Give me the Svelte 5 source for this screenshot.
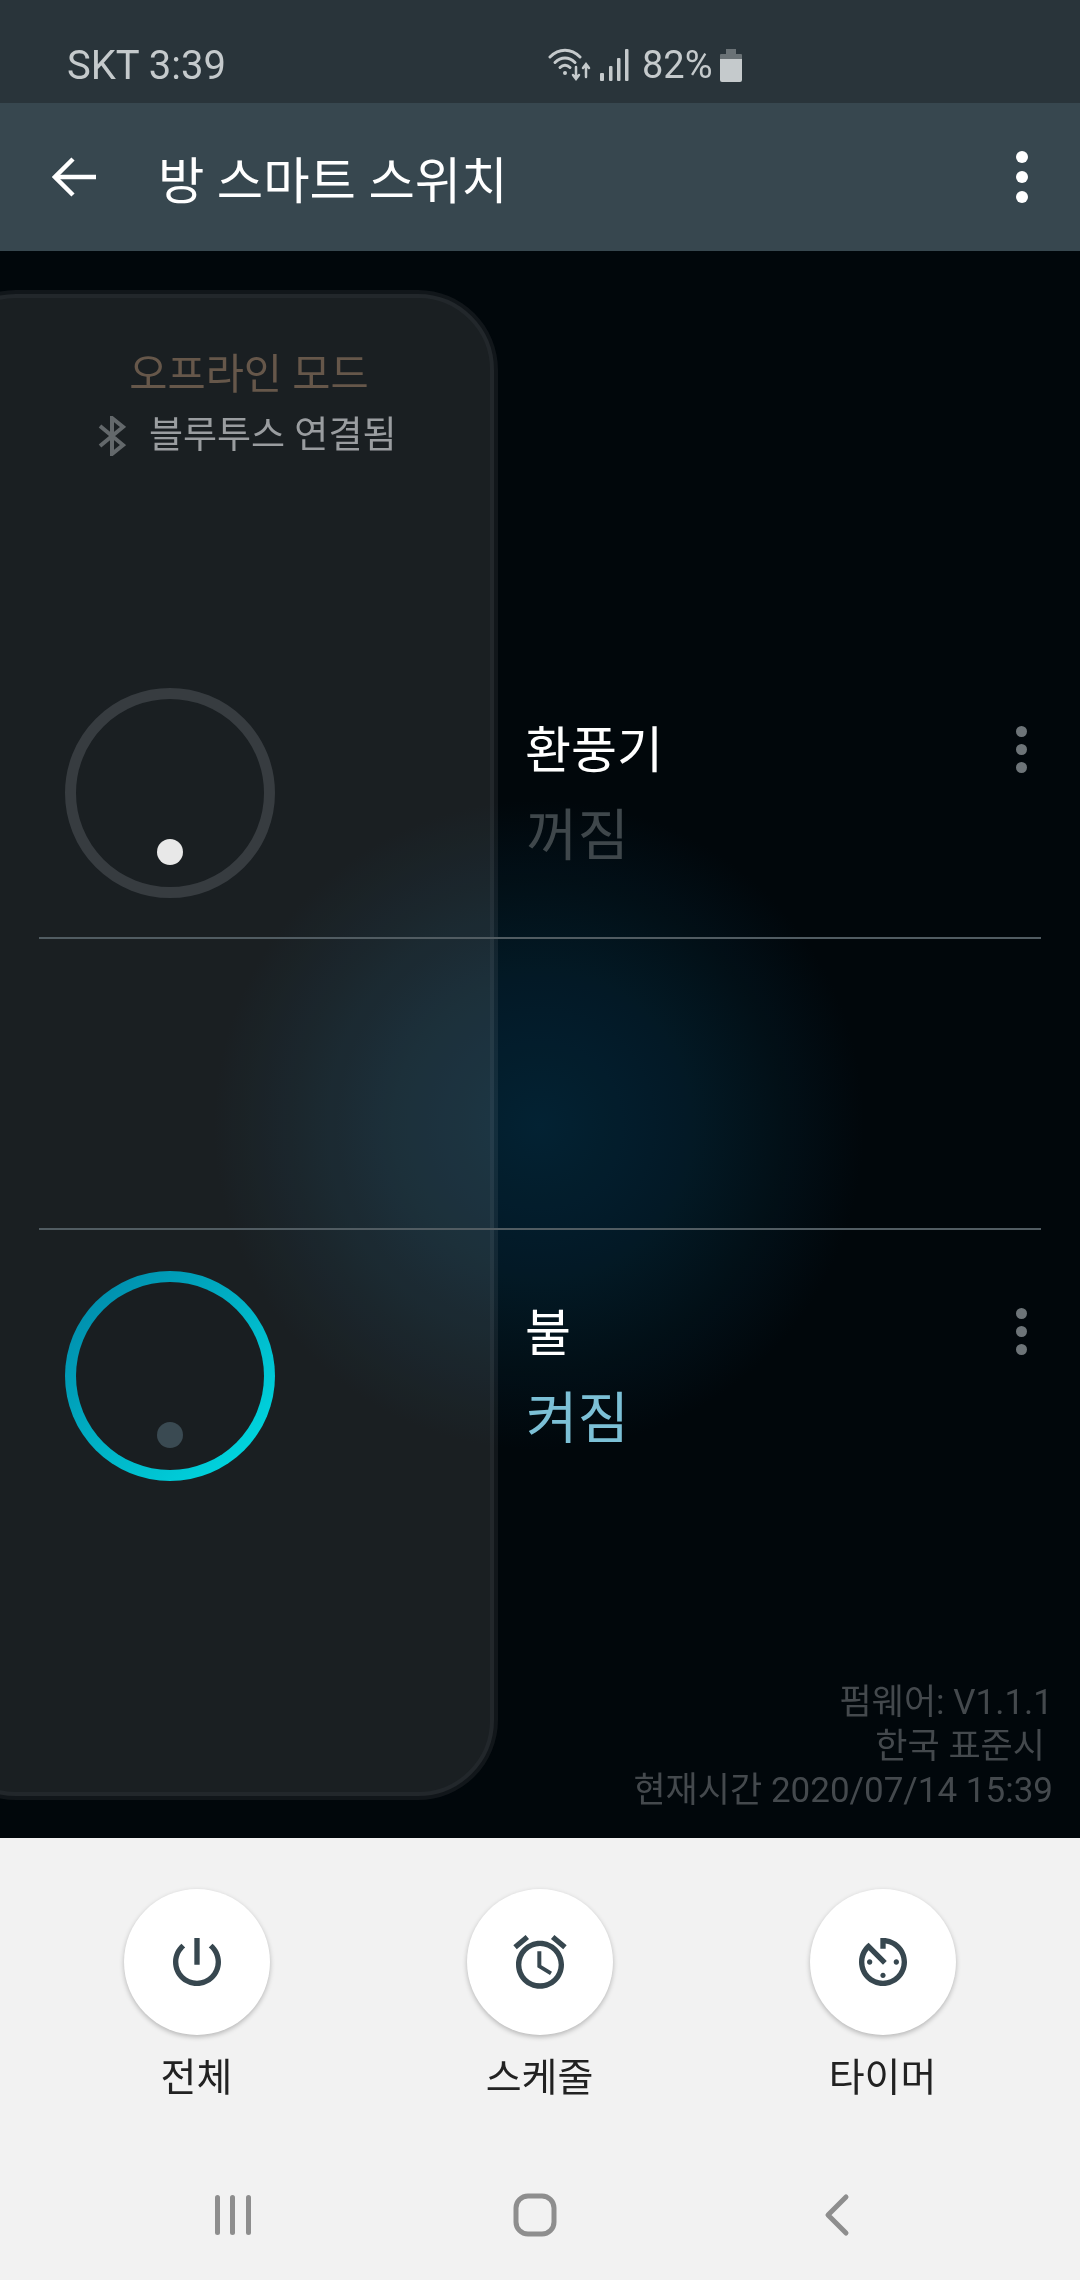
<script>
	const switches = [
		{ name: '환풍기', on: false, state: '꺼짐' },
		{ name: '불', on: true, state: '켜짐' }
	];

	const actions = [
		{
			label: '전체',
			d: 'M13 3h-2v10h2V3zm4.83 2.17l-1.42 1.42C17.99 7.86 19 9.81 19 12c0 3.87-3.13 7-7 7s-7-3.13-7-7c0-2.19 1.01-4.14 2.58-5.42L6.17 5.17C4.23 6.82 3 9.26 3 12c0 4.97 4.03 9 9 9s9-4.03 9-9c0-2.74-1.23-5.18-3.17-6.83z'
		},
		{
			label: '스케줄',
			d: 'M22 5.72l-4.6-3.86-1.29 1.53 4.6 3.86L22 5.72zM7.88 3.39L6.6 1.86 2 5.71l1.29 1.53 4.59-3.85zM12.5 8H11v6l4.75 2.85.75-1.23-4-2.37V8zM12 4c-4.97 0-9 4.03-9 9s4.02 9 9 9c4.97 0 9-4.03 9-9s-4.03-9-9-9zm0 16c-3.87 0-7-3.13-7-7s3.13-7 7-7 7 3.13 7 7-3.13 7-7 7z'
		},
		{
			label: '타이머',
			d: 'M11 17c0 .55.45 1 1 1s1-.45 1-1-.45-1-1-1-1 .45-1 1zm0-14v4h2V5.08c3.39.49 6 3.39 6 6.92 0 3.87-3.13 7-7 7s-7-3.13-7-7c0-1.68.59-3.22 1.58-4.42L12 13l1.41-1.41-6.8-6.8v.02C4.42 6.45 3 9.05 3 12c0 4.97 4.02 9 9 9 4.97 0 9-4.03 9-9s-4.03-9-9-9h-1zm7 9c0-.55-.45-1-1-1s-1 .45-1 1 .45 1 1 1 1-.45 1-1zM6 12c0 .55.45 1 1 1s1-.45 1-1-.45-1-1-1-1 .45-1 1z'
		}
	];
</script>

<div class="page">
	<div class="status-bar">
		<span class="carrier">SKT 3:39</span>
		<div class="status-right">
			<svg class="wifi" width="44" height="34" viewBox="0 0 44 34" fill="none" stroke="#c5cacc" stroke-width="3" stroke-linecap="round">
				<path d="M2 9C11 0 23 0 32 9" />
				<path d="M7 14.5C13 8.5 21 8.500 27 14.500" />
				<path d="M12 19.500C15 16.500 19 16.500 22 19.500" />
				<circle cx="17" cy="25" r="2" fill="#c5cacc" stroke="none" />
				<path d="M28 19v11M25 27l3 4 3-4" stroke-width="2.500" />
				<path d="M38 29V17M35 20l3-4 3 4" stroke-width="2.500" />
			</svg>
			<svg class="signal" width="30" height="32" viewBox="0 0 30 32" fill="#c5cacc">
				<rect x="0" y="24" width="4" height="8" rx="1" />
				<rect x="9" y="17" width="3.500" height="15" rx="1" />
				<rect x="17" y="9" width="3.500" height="23" rx="1" />
				<rect x="25" y="0" width="3.500" height="32" rx="1" />
			</svg>
			<span class="battery-text">82%</span>
			<svg class="battery" width="22" height="33" viewBox="0 0 22 33">
				<path d="M6 0h10v5h5a1 1 0 0 1 1 1v4H0V6a1 1 0 0 1 1-1h5z" fill="#6a7276" />
				<path d="M0 10h22v21a2 2 0 0 1-2 2H2a2 2 0 0 1-2-2z" fill="#c5cacc" />
			</svg>
		</div>
	</div>

	<header class="toolbar">
		<svg class="back" width="44" height="40" viewBox="0 0 44 40" fill="none" stroke="#fff" stroke-width="4.500">
			<path d="M44 20H3" />
			<path d="M21 2L3 20l18 18" />
		</svg>
		<h1>방 스마트 스위치</h1>
		<div class="dots large"><i></i><i></i><i></i></div>
	</header>

	<main class="content">
		<div class="panel">
			<p class="mode">오프라인 모드</p>
			<p class="bluetooth">
				<svg width="28" height="40" viewBox="0 0 28 40" fill="none" stroke="#63686b" stroke-width="4">
					<path d="M2 10l23 19-11 9V2l11 9L2 30" />
				</svg>
				<span>블루투스 연결됨</span>
			</p>
		</div>
		<div class="glow"></div>

		{#each switches as item, i}
			<section class="row" class:first={i === 0}>
				<div class="knob" class:on={item.on}>
					<span class="knob-dot"></span>
				</div>
				<div class="labels">
					<div class="name">{item.name}</div>
					<div class="state">{item.state}</div>
				</div>
				<div class="dots"><i></i><i></i><i></i></div>
			</section>
			{#if i === 0}
				<div class="gap-row"></div>
			{/if}
		{/each}

		<footer class="device-info">
			<div>펌웨어: V1.1.1</div>
			<div class="tz">한국 표준시</div>
			<div>현재시간 2020/07/14 15:39</div>
		</footer>
	</main>

	<div class="bottom">
		<div class="actions">
			{#each actions as action}
				<div class="action">
					<div class="round">
						<svg width="64" height="64" viewBox="0 0 24 24" fill="#37474f"><path d={action.d} /></svg>
					</div>
					<span>{action.label}</span>
				</div>
			{/each}
		</div>

		<nav class="nav">
			<svg width="40" height="44" viewBox="0 0 40 44" fill="#8e8e8e">
				<rect x="2" y="2" width="5" height="40" rx="2.500" />
				<rect x="17" y="2" width="5" height="40" rx="2.500" />
				<rect x="33" y="2" width="5" height="40" rx="2.500" />
			</svg>
			<svg width="44" height="44" viewBox="0 0 44 44" fill="none" stroke="#8e8e8e" stroke-width="5">
				<rect x="3" y="3" width="38" height="38" rx="12" />
			</svg>
			<svg width="26" height="44" viewBox="0 0 26 44" fill="none" stroke="#8e8e8e" stroke-width="5" stroke-linecap="round" stroke-linejoin="round">
				<path d="M22 4L4 22l18 18" />
			</svg>
		</nav>
	</div>
</div>

<style>
	:global(body) {
		margin: 0;
		background: #01070b;
	}

	.page {
		width: 1080px;
		height: 2280px;
		display: flex;
		flex-direction: column;
		overflow: hidden;
		font-family: Roboto, 'Noto Sans CJK KR', sans-serif;
	}

	.status-bar {
		height: 103px;
		flex: none;
		box-sizing: border-box;
		padding: 27px 0 0 67px;
		background: #29343a;
		color: #c5cacc;
		display: flex;
		align-items: center;
		font-size: 40px;
	}

	.carrier {
		width: 481px;
	}

	.status-right {
		display: flex;
		align-items: center;
	}

	.wifi {
		margin-right: 8px;
	}

	.signal {
		margin-right: 12px;
	}

	.battery-text {
		font-size: 38px;
		width: 78px;
	}

	.toolbar {
		height: 148px;
		flex: none;
		background: #37474f;
		display: flex;
		align-items: center;
	}

	.back {
		margin-left: 52px;
	}

	.toolbar h1 {
		margin: 0 0 0 62px;
		font-weight: 400;
		font-size: 50.4px;
		color: #fff;
		flex: 1;
	}

	.dots {
		display: flex;
		flex-direction: column;
		align-items: center;
		gap: 7px;
		margin: 78px 14px 0 0;
		align-self: flex-start;
	}

	.dots i {
		width: 11px;
		height: 11px;
		border-radius: 50%;
		background: #6d7478;
	}

	.dots.large {
		gap: 8px;
		margin: 0 52px 0 0;
		align-self: center;
	}

	.dots.large i {
		width: 12px;
		height: 12px;
		background: #fff;
	}

	.content {
		flex: 1;
		position: relative;
		background: #01070b;
		padding-top: 397px;
		display: flex;
		flex-direction: column;
	}

	.panel {
		position: absolute;
		left: -60px;
		top: 43px;
		width: 546px;
		height: 1494px;
		box-sizing: content-box;
		border: 4px solid #22272b;
		border-radius: 76px;
		box-shadow: 0 0 0 4px #11161a;
		background: #1a1f22;
	}

	.mode {
		margin: 0;
		padding-top: 49px;
		padding-left: 64px;
		text-align: center;
		font-size: 41.5px;
		line-height: 56px;
		color: #66574a;
	}

	.bluetooth {
		margin: 8px 0 0;
		padding-left: 154px;
		display: flex;
		align-items: center;
		gap: 23px;
		font-size: 37px;
		line-height: 50px;
		color: #9a9da0;
	}

	/* additive light over both the panel and the black background */
	.glow {
		position: absolute;
		left: 214px;
		top: 549px;
		width: 650px;
		height: 650px;
		mix-blend-mode: screen;
		background: radial-gradient(circle closest-side, #021c2a 0%, #02131c 45%, #000 100%);
	}

	.row {
		height: 291px;
		box-sizing: border-box;
		position: relative;
		display: flex;
		align-items: center;
		margin: 0 39px;
		padding-left: 26px;
	}

	.row.first {
		border-bottom: 2px solid #515c62;
	}

	.gap-row {
		height: 291px;
		margin: 0 39px;
		border-bottom: 2px solid #515c62;
		box-sizing: border-box;
		flex: none;
		position: relative;
	}

	.knob {
		width: 210px;
		height: 210px;
		flex: none;
		box-sizing: border-box;
		border-radius: 50%;
		border: 11px solid #373c40;
		display: flex;
		align-items: flex-end;
		justify-content: center;
		padding-bottom: 22px;
		margin-right: 250px;
	}

	.knob.on {
		border-color: transparent;
		background:
			linear-gradient(#191e21, #191e21) padding-box,
			linear-gradient(135deg, #0084a6 0%, #00e0e6 100%) border-box;
	}

	.knob-dot {
		width: 26px;
		height: 26px;
		border-radius: 50%;
		background: #e8e8e8;
	}

	.on .knob-dot {
		background: #3a4a52;
	}

	.labels {
		flex: 1;
		display: flex;
		flex-direction: column;
		gap: 17px;
		padding-top: 5px;
	}

	.name {
		font-size: 50px;
		line-height: 64px;
		color: #fff;
	}

	.state {
		font-size: 56px;
		line-height: 72px;
		color: #3f474b;
		padding-left: 1px;
	}

	.on + .labels .state {
		color: #7cc0d6;
	}

	.device-info {
		margin-top: auto;
		padding: 0 27px 25px 0;
		text-align: right;
		font-size: 35px;
		line-height: 44px;
		color: #44494d;
		position: relative;
	}

	.tz {
		padding-right: 8px;
	}

	.bottom {
		height: 442px;
		flex: none;
		background: #f2f2f2;
		display: flex;
		flex-direction: column;
	}

	.actions {
		display: grid;
		grid-template-columns: repeat(3, 343px);
		padding: 51px 0 0 25px;
	}

	.action {
		display: flex;
		flex-direction: column;
		align-items: center;
		gap: 18px;
		font-size: 39px;
		line-height: 50px;
		color: #222;
	}

	.round {
		width: 146px;
		height: 146px;
		border-radius: 50%;
		background: #fff;
		box-shadow: 0 2px 5px rgba(0, 0, 0, 0.25);
		display: flex;
		align-items: center;
		justify-content: center;
	}

	.nav {
		margin-top: 90px;
		display: grid;
		grid-template-columns: repeat(3, 302px);
		padding-left: 82px;
		justify-items: center;
	}
</style>
